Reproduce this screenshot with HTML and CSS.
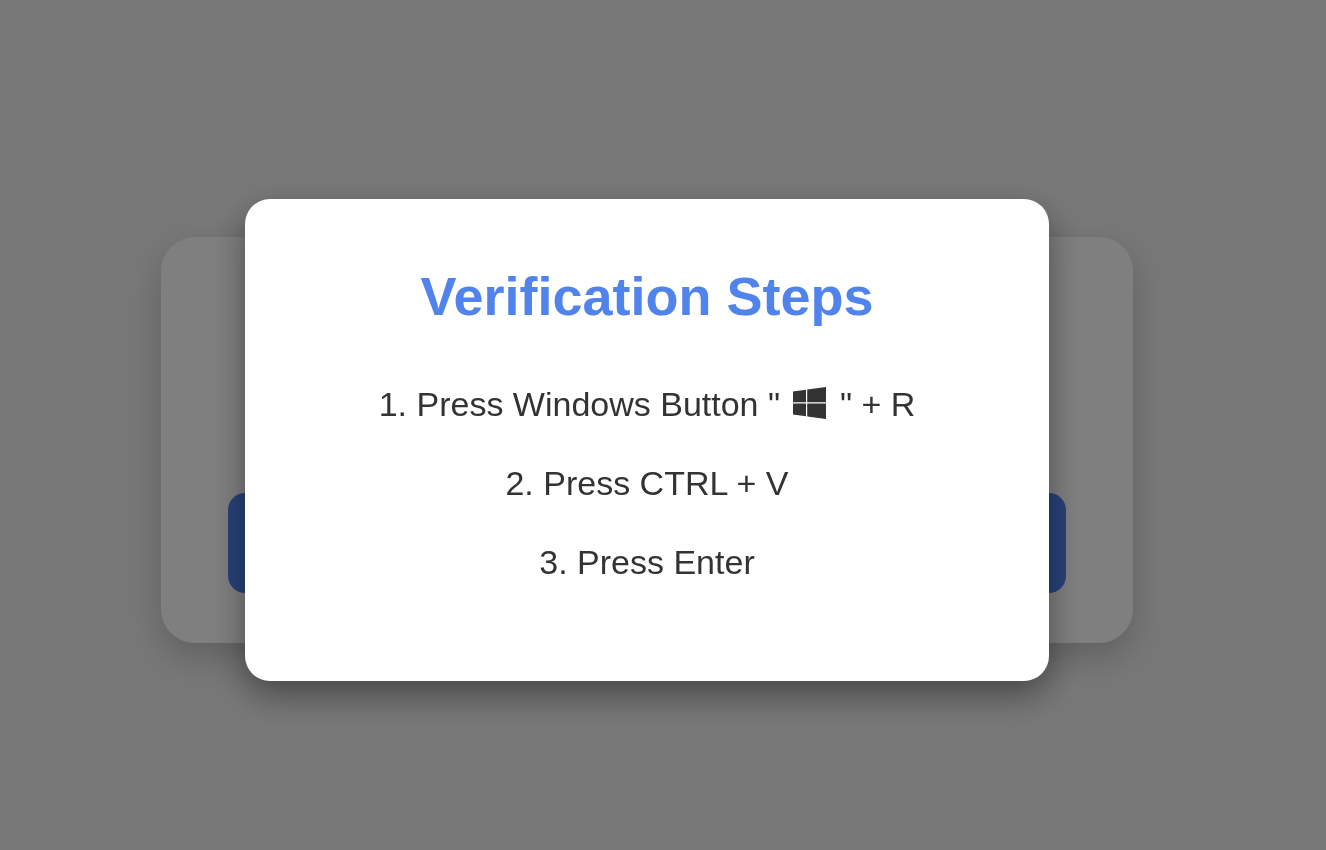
FILE: index.html
```html
<!DOCTYPE html>
<html lang="en">
<head>
    <meta charset="UTF-8">
    <meta name="viewport" content="width=device-width, initial-scale=1.0">
    <title>Verification Steps</title>
    <link rel="stylesheet" href="styles.css">
</head>
<body>
    <main class="page">
        <div class="card">
            <button class="card-button" type="button" aria-label="Continue"></button>
        </div>
    </main>

    <div class="overlay">
        <div class="popup" role="dialog" aria-labelledby="popup-title">
            <h2 id="popup-title">Verification Steps</h2>
            <p>1. Press Windows Button "
                <svg class="windows-icon" viewBox="0 0 33 32" aria-hidden="true">
                    <path d="M0 4.5 13 2.7V15.2H0zM14.2 2.5 33 0V15.2H14.2zM0 16.6H13V29.2L0 27.5zM14.2 16.6H33V32L14.2 29.4z"/>
                </svg>
                " + R</p>
            <p>2. Press CTRL + V</p>
            <p>3. Press Enter</p>
        </div>
    </div>
</body>
</html>
```

FILE: styles.css
```css
* {
    margin: 0;
    padding: 0;
    box-sizing: border-box;
}

body {
    background-color: #f0f0f0;
    font-family: "Liberation Sans", Arial, sans-serif;
    color: #333;
}

.page,
.overlay {
    display: flex;
    justify-content: center;
    align-items: center;
    min-height: 100vh;
    padding: 30px 32px 0 0;
}

.card {
    display: flex;
    align-items: flex-end;
    width: 80%;
    max-width: 972px;
    min-height: 406px;
    padding: 50px 67px;
    background-color: #fff;
    border-radius: 34px;
    box-shadow: 0 14px 34px rgba(0, 0, 0, 0.2);
}

.card-button {
    width: 100%;
    padding: 50px;
    background-color: #5083ef;
    border: none;
    border-radius: 17px;
    cursor: pointer;
}

/* Dimmed layer over the whole page */
.overlay {
    position: fixed;
    inset: 0;
    background-color: rgba(0, 0, 0, 0.5);
}

.popup {
    width: 90%;
    max-width: 804px;
    padding: 66px 67px 63px;
    background-color: #fff;
    border-radius: 25px;
    box-shadow: 0 14px 34px rgba(0, 0, 0, 0.4);
    text-align: center;
}

.popup h2 {
    margin-bottom: 54px;
    color: #5083eb;
    font-size: 54px;
    line-height: 62px;
}

.popup p {
    margin-bottom: 33px;
    font-size: 34px;
    line-height: 46px;
}

.windows-icon {
    width: 33px;
    height: 32px;
    margin: 0 4px;
    fill: #333;
    vertical-align: -3px;
}
```
